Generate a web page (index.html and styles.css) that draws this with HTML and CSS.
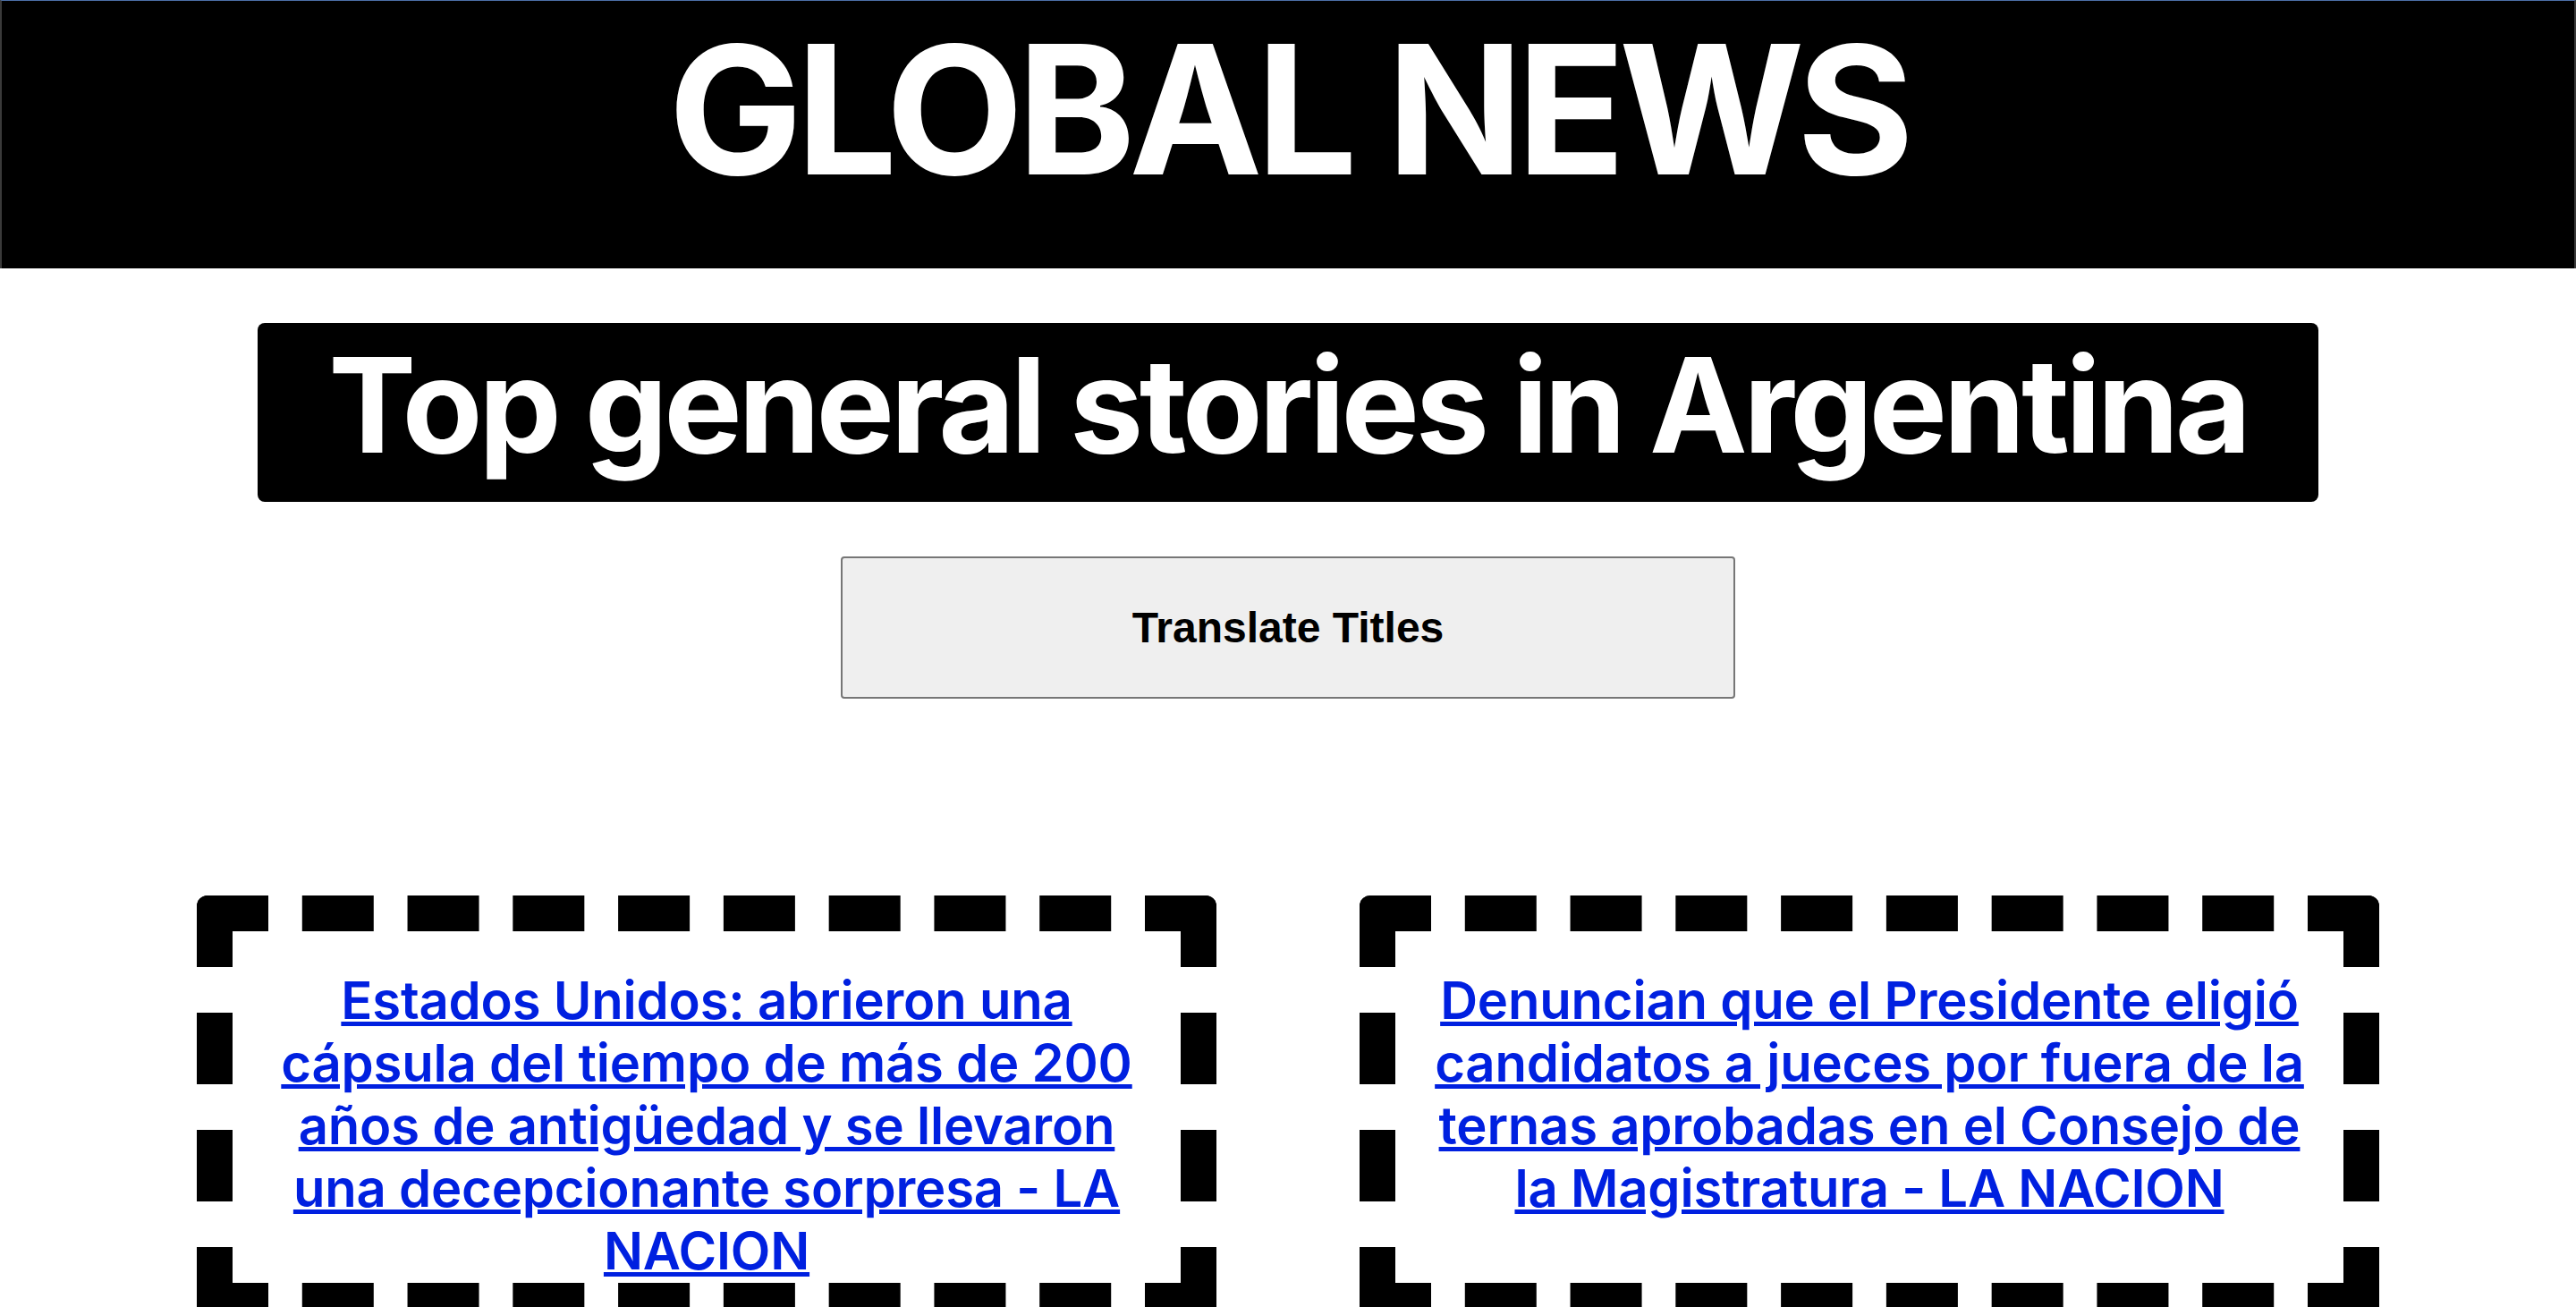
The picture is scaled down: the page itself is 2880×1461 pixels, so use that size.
FILE: index.html
```html
<!DOCTYPE html>
<html lang="en">
<head>
<meta charset="utf-8">
<title>Global News</title>
<link rel="stylesheet" href="styles.css">
</head>
<body>
<header class="masthead">
  <h1 class="masthead-title">GLOBAL NEWS</h1>
</header>
<main class="page">
  <h2 class="section-title">Top general stories in Argentina</h2>
  <div class="actions">
    <button class="translate-btn" type="button">Translate Titles</button>
  </div>
  <section class="stories">
    <article class="story-card">
      <h3 class="story-title"><a href="#">Estados Unidos: abrieron una cápsula del tiempo de más de 200 años de antigüedad y se llevaron una decepcionante sorpresa - LA NACION</a></h3>
    </article>
    <article class="story-card">
      <h3 class="story-title"><a href="#">Denuncian que el Presidente eligió candidatos a jueces por fuera de la ternas aprobadas en el Consejo de la Magistratura - LA NACION</a></h3>
    </article>
  </section>
</main>
</body>
</html>
```
FILE: styles.css
```css
html, body {
  margin: 0;
  padding: 0;
  background: #ffffff;
}

body {
  font-family: Inter, "Liberation Sans", sans-serif;
  color: #000;
}

.masthead {
  background: #000;
  border-top: 1px solid #4d70a8;
  border-left: 2px solid #3a3a3a;
  border-right: 2px solid #3a3a3a;
  height: 299px;
  box-sizing: content-box;
  text-align: center;
}

.masthead-title {
  margin: 0;
  color: #fff;
  font-family: Inter, sans-serif;
  font-weight: 700;
  font-size: 200px;
  line-height: 242px;
  letter-spacing: -0.036em;
}

.page {
  display: flex;
  flex-direction: column;
  align-items: center;
}

.section-title {
  box-sizing: border-box;
  width: 80%;
  margin: 61px 0 0;
  padding: 3px 0 19px;
  background: #000;
  color: #fff;
  border-radius: 8px;
  text-align: center;
  font-family: Inter, sans-serif;
  font-weight: 700;
  font-size: 147px;
  line-height: 178px;
  letter-spacing: -0.03em;
}

.actions {
  margin-top: 61px;
  display: flex;
  justify-content: center;
}

.translate-btn {
  box-sizing: border-box;
  width: 1000px;
  height: 159px;
  background: #efefef;
  border: 2px solid #767676;
  border-radius: 4px;
  font-family: "Liberation Sans", Arial, sans-serif;
  font-weight: 700;
  font-size: 48px;
  color: #000;
}

.stories {
  align-self: stretch;
  display: grid;
  grid-template-columns: 1fr 1fr;
  gap: 160px;
  padding: 0 220px;
  margin-top: 220px;
}

.story-card {
  border: 40px dashed #000;
  border-radius: 12px;
  padding: 42px 44px 1px;
  text-align: center;
}

.story-title {
  margin: 0;
  font-family: Inter, sans-serif;
  font-weight: 600;
  font-size: 58px;
  line-height: normal;
  letter-spacing: -0.2px;
}

.story-title a {
  color: #0020e0;
  text-decoration: underline;
}
```
